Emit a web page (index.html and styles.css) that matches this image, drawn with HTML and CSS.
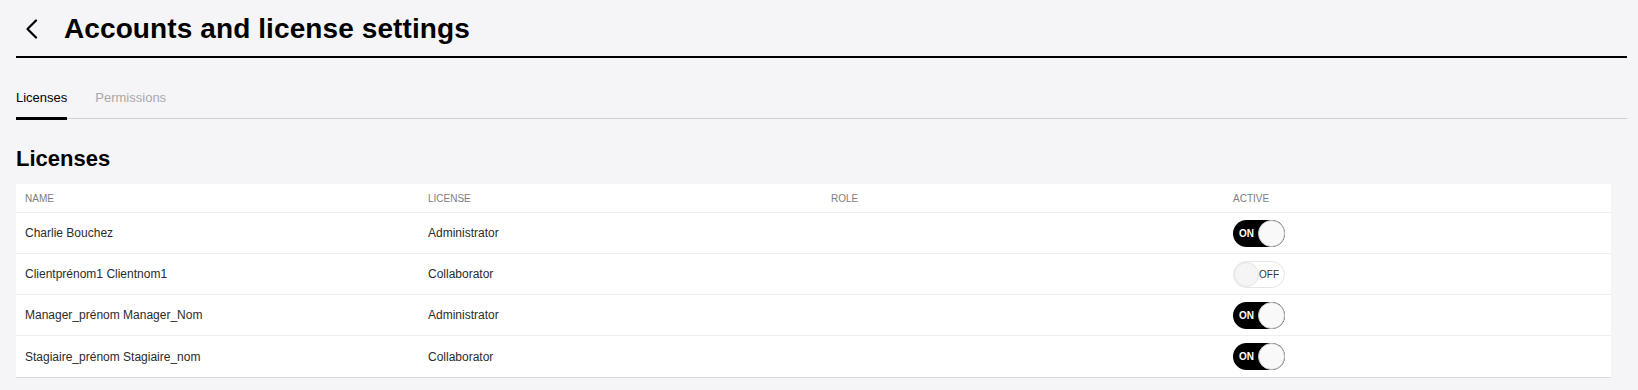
FILE: index.html
```html
<!DOCTYPE html>
<html lang="en">
<head>
    <meta charset="UTF-8">
    <meta name="viewport" content="width=device-width, initial-scale=1.0">
    <title>Accounts and license settings</title>
    <link rel="stylesheet" href="styles.css">
</head>
<body>

    <div class="page">
        <!-- Cabecera -->
        <header class="page-header">
            <button class="back" aria-label="Back">
                <svg width="14" height="20" viewBox="0 0 14 20">
                    <polyline points="11,1.5 2.5,10 11,18.5" fill="none" stroke="#000" stroke-width="2.2" stroke-linecap="round" stroke-linejoin="round"/>
                </svg>
            </button>
            <h1>Accounts and license settings</h1>
        </header>

        <!-- Pestañas -->
        <nav class="tabs">
            <a class="tab active" href="#">Licenses</a>
            <a class="tab" href="#">Permissions</a>
        </nav>

        <h2 class="section-title">Licenses</h2>

        <div class="table">
            <div class="row head">
                <div class="cell">Name</div>
                <div class="cell">License</div>
                <div class="cell">Role</div>
                <div class="cell">Active</div>
            </div>
            <div class="row">
                <div class="cell">Charlie Bouchez</div>
                <div class="cell">Administrator</div>
                <div class="cell"></div>
                <div class="cell"><span class="toggle on"><span class="label">ON</span><span class="knob"></span></span></div>
            </div>
            <div class="row">
                <div class="cell">Clientprénom1 Clientnom1</div>
                <div class="cell">Collaborator</div>
                <div class="cell"></div>
                <div class="cell"><span class="toggle off"><span class="knob"></span><span class="label">OFF</span></span></div>
            </div>
            <div class="row">
                <div class="cell">Manager_prénom Manager_Nom</div>
                <div class="cell">Administrator</div>
                <div class="cell"></div>
                <div class="cell"><span class="toggle on"><span class="label">ON</span><span class="knob"></span></span></div>
            </div>
            <div class="row">
                <div class="cell">Stagiaire_prénom Stagiaire_nom</div>
                <div class="cell">Collaborator</div>
                <div class="cell"></div>
                <div class="cell"><span class="toggle on"><span class="label">ON</span><span class="knob"></span></span></div>
            </div>
        </div>
    </div>

</body>
</html>
```

FILE: styles.css
```css
* {
    margin: 0;
    padding: 0;
    box-sizing: border-box;
}

body {
    background-color: #f5f5f7;
    font-family: "Liberation Sans", Arial, sans-serif;
    color: #000;
}

.page {
    padding: 0 11px 0 16px;
}

/* Cabecera */
.page-header {
    display: flex;
    align-items: center;
    gap: 25px;
    padding: 13px 0 11px;
    border-bottom: 2px solid #000;
}

.back {
    display: flex;
    margin-left: 9px;
    background: none;
    border: none;
    cursor: pointer;
}

.page-header h1 {
    font-size: 28px;
    line-height: 32px;
    font-weight: 700;
    letter-spacing: 0.1px;
}

/* Pestañas */
.tabs {
    display: flex;
    gap: 28px;
    margin-top: 32px;
    border-bottom: 1px solid #cfcfd2;
}

.tab {
    font-size: 13px;
    line-height: 16px;
    padding-bottom: 11px;
    margin-bottom: -2px;
    border-bottom: 3px solid transparent;
    color: #a8a8ab;
    text-decoration: none;
}

.tab.active {
    color: #000;
    border-bottom-color: #000;
}

.section-title {
    margin-top: 27px;
    margin-bottom: 12px;
    font-size: 22px;
    line-height: 26px;
    font-weight: 700;
}

/* Tabla */
.table {
    margin-right: 16px;
    background-color: #fff;
    border-bottom: 1px solid #dcdcdf;
}

.row {
    display: grid;
    grid-template-columns: 403px 403px 402px 1fr;
    align-items: center;
    height: 41px;
    border-bottom: 1px solid #efeff1;
    font-size: 12px;
    color: #2b2b2b;
}

.row:last-child {
    border-bottom: none;
}

.row.head {
    height: 29px;
    font-size: 10px;
    text-transform: uppercase;
    color: #7d7d80;
}

.cell {
    padding-left: 9px;
}

/* Interruptor */
.toggle {
    display: inline-flex;
    align-items: center;
    justify-content: space-between;
    width: 52px;
    height: 27px;
    border-radius: 14px;
    font-size: 10px;
    font-weight: 700;
    vertical-align: middle;
}

.toggle .knob {
    width: 27px;
    height: 27px;
    border-radius: 50%;
    background-color: #f9f9f9;
    border: 1px solid #c8c8c8;
}

.toggle.on {
    background-color: #000;
    color: #fff;
    padding-left: 6px;
}

.toggle.off {
    background-color: #fff;
    border: 1px solid #e6e6e6;
    color: #333;
    font-weight: 400;
    padding-right: 5px;
}

.toggle.off .knob {
    width: 25px;
    height: 25px;
    border-color: #e4e4e4;
    background-color: #f5f5f5;
}
```
